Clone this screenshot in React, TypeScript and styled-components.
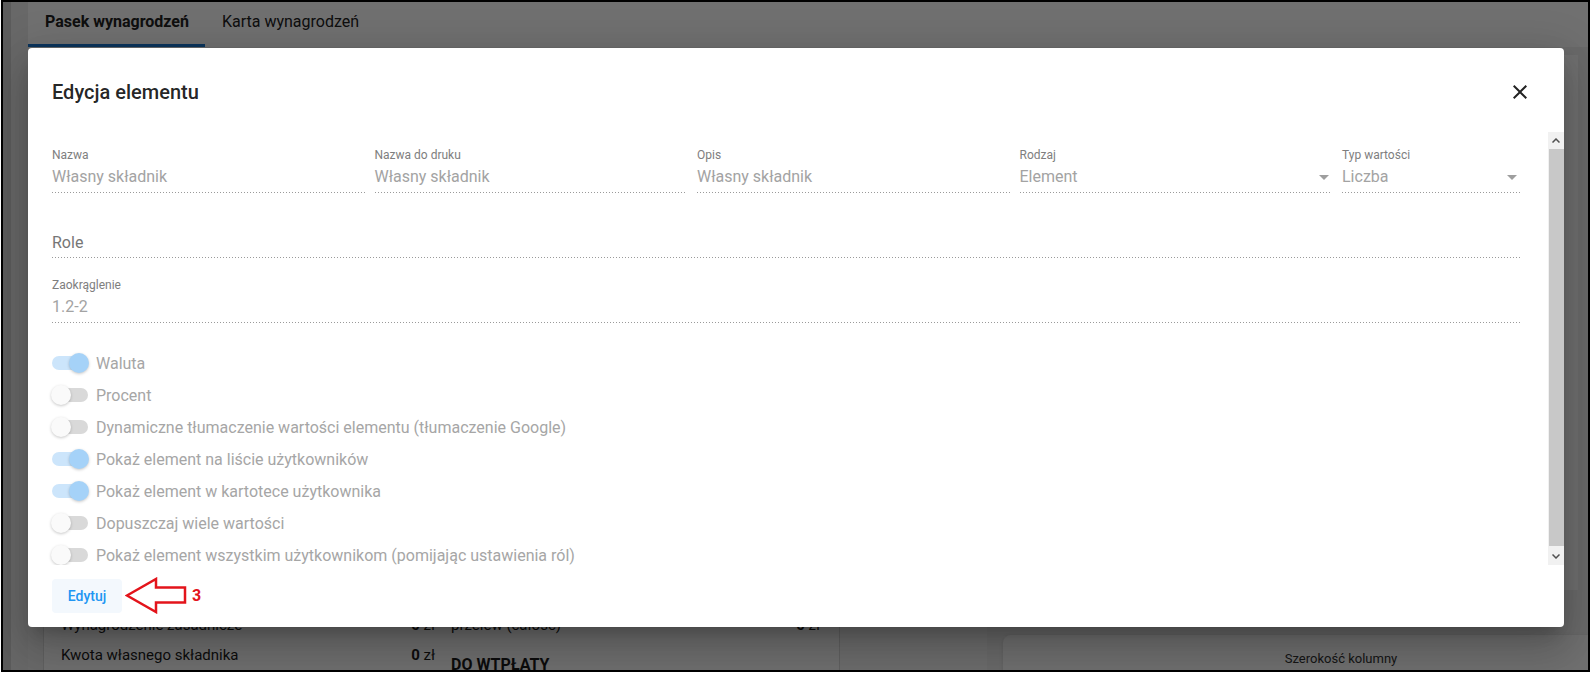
import styled, { createGlobalStyle } from "styled-components";

const GlobalStyle = createGlobalStyle`
  html, body {
    margin: 0;
    padding: 0;
    background: #fff;
  }
  body {
    font-family: Roboto, "Noto Sans", sans-serif;
  }
`;

const Frame = styled.div`
  position: relative;
  box-sizing: border-box;
  width: 1589px;
  height: 672px;
  margin-left: 1px;
  border: 2px solid #000;
  overflow: hidden;
  display: flex;
  background: #f1f1f1;
`;

const Sidebar = styled.div`
  flex: none;
  box-sizing: border-box;
  width: 25px;
  background: #ececec;
  border-left: 8px solid #d2d2d2;
`;

const Main = styled.div`
  flex: 1;
  display: flex;
  flex-direction: column;
  min-width: 0;
`;

const TabBar = styled.div`
  flex: none;
  height: 45px;
  display: flex;
  background: #fff;
`;

const Tab = styled.div<{ active?: boolean }>`
  box-sizing: border-box;
  display: flex;
  align-items: center;
  padding: 0 16px 3px 17px;
  font-size: 16px;
  font-weight: ${(p) => (p.active ? 700 : 400)};
  color: #222;
  white-space: nowrap;
  border-bottom: 3px solid ${(p) => (p.active ? "#1976d2" : "transparent")};
`;

const Body = styled.div`
  flex: 1;
  display: flex;
  flex-direction: column;
  padding: 0 0 0 15px;
`;

const UpperPanel = styled.div`
  flex: none;
  height: 535px;
  margin: 8px 10px 0 0;
  background: #fff;
`;

const BottomRow = styled.div`
  display: flex;
  align-items: flex-start;
`;

const SummaryCard = styled.div`
  flex: none;
  width: 796px;
  height: 120px;
  display: grid;
  grid-template-columns: 397px 1fr;
  padding-top: 20px;
  box-sizing: border-box;
  background: #fff;
  border-left: 1px solid #dcdcdc;
`;

const SummaryCol = styled.div<{ left?: boolean }>`
  padding: ${(p) => (p.left ? "0 6px 0 17px" : "0 19px 0 10px")};
`;

const SummaryRow = styled.div`
  display: flex;
  justify-content: space-between;
  line-height: 30px;
  font-size: 15px;
  color: #1c1c1c;
  b {
    font-weight: 700;
  }
`;

const Heading = styled.div`
  margin-top: 13px;
  line-height: 24px;
  font-size: 16px;
  font-weight: 700;
  color: #1c1c1c;
`;

const SideCard = styled.div`
  flex: none;
  width: 148px;
  height: 120px;
  background: #f7f7f7;
  border-left: 1px solid #dedede;
  box-sizing: border-box;
`;

const WidthCard = styled.div`
  flex: none;
  width: 676px;
  height: 80px;
  margin: 45px 0 0 16px;
  padding-top: 17px;
  box-sizing: border-box;
  background: #fff;
  border-radius: 8px 8px 0 0;
  box-shadow: 0 1px 4px rgba(0, 0, 0, 0.12);
  text-align: center;
  font-size: 13px;
  line-height: 14px;
  color: #333;
`;

const Backdrop = styled.div`
  position: absolute;
  inset: 0;
  background: rgba(0, 0, 0, 0.56);
`;

const Dialog = styled.div`
  position: absolute;
  left: 25px;
  top: 46px;
  width: 1536px;
  height: 579px;
  display: flex;
  flex-direction: column;
  background: #fff;
  border-radius: 4px;
  overflow: hidden;
  box-shadow: 0 11px 15px -7px rgba(0, 0, 0, 0.2),
    0 24px 38px 3px rgba(0, 0, 0, 0.14), 0 9px 46px 8px rgba(0, 0, 0, 0.12);
`;

const Header = styled.div`
  flex: none;
  display: flex;
  align-items: center;
  padding: 28px 32px 0 24px;
  height: 32px;
`;

const Title = styled.h2`
  flex: 1;
  margin: 0;
  font-size: 20px;
  font-weight: 500;
  line-height: 32px;
  color: rgba(0, 0, 0, 0.87);
`;

const CloseIcon = styled.svg`
  width: 24px;
  height: 24px;
  fill: #222;
`;

const ScrollArea = styled.div`
  flex: none;
  height: 433px;
  margin-top: 24px;
  display: flex;
`;

const ScrollContent = styled.div`
  flex: 1;
  min-width: 0;
  padding: 15px 28px 0 24px;
  overflow: hidden;
`;

const FieldRow = styled.div`
  display: grid;
  grid-template-columns: repeat(4, 312.5px) 1fr;
  column-gap: 10px;
`;

const Field = styled.div<{ gap?: number }>`
  display: flex;
  flex-direction: column;
  margin-top: ${(p) => p.gap ?? 0}px;
`;

const FieldLabel = styled.div`
  height: 16px;
  font-size: 12px;
  line-height: 16px;
  color: #7e7e7e;
  white-space: nowrap;
`;

const FieldValue = styled.div<{ dark?: boolean }>`
  display: flex;
  align-items: center;
  justify-content: space-between;
  padding: ${(p) => (p.dark ? "5px 0 5px" : "4px 0 6px")};
  font-size: 16px;
  line-height: 20px;
  color: ${(p) => (p.dark ? "#767676" : "#a3a3a3")};
  background-image: linear-gradient(to right, #9a9a9a 1px, transparent 1px);
  background-size: 3px 1px;
  background-repeat: repeat-x;
  background-position: left bottom;
  white-space: nowrap;
`;

const DropArrow = styled.span`
  width: 0;
  height: 0;
  margin-right: 3px;
  border-left: 5px solid transparent;
  border-right: 5px solid transparent;
  border-top: 5px solid #9e9e9e;
`;

const SwitchList = styled.div`
  margin-top: 24px;
  display: flex;
  flex-direction: column;
`;

const SwitchRow = styled.div`
  display: flex;
  align-items: center;
  height: 32px;
`;

const Track = styled.span<{ on: boolean }>`
  position: relative;
  flex: none;
  width: 36px;
  height: 14px;
  border-radius: 7px;
  background: ${(p) => (p.on ? "#cce5fb" : "#d9d9d9")};
`;

const Thumb = styled.span<{ on: boolean }>`
  position: absolute;
  top: -3px;
  left: ${(p) => (p.on ? "17px" : "-1px")};
  width: 20px;
  height: 20px;
  border-radius: 50%;
  background: ${(p) => (p.on ? "#a5d2f8" : "#fafafa")};
  box-shadow: 0 1px 3px rgba(0, 0, 0, 0.22);
`;

const SwitchLabel = styled.span`
  margin-left: 8px;
  font-size: 16px;
  color: #a6a6a6;
  white-space: nowrap;
`;

const Scrollbar = styled.div`
  flex: none;
  width: 16px;
  display: flex;
  flex-direction: column;
  background: #f1f1f1;
`;

const ScrollButton = styled.div`
  flex: none;
  height: 17px;
  display: flex;
  align-items: center;
  justify-content: center;
  svg {
    width: 8px;
    height: 5px;
    stroke: #505050;
    stroke-width: 1.5;
    fill: none;
  }
`;

const ScrollThumb = styled.div`
  flex: 1;
  margin: 0 0 2px 1px;
  background: #c8c8c8;
`;

const Actions = styled.div`
  flex: none;
  display: flex;
  align-items: center;
  padding: 12px 24px 16px;
`;

const EditButton = styled.button`
  width: 70px;
  height: 34px;
  border: none;
  border-radius: 4px;
  background: #f3f8fd;
  color: #2196f3;
  font-family: Roboto, sans-serif;
  font-size: 14px;
  font-weight: 500;
  padding: 0;
`;

const Pointer = styled.svg`
  width: 62px;
  height: 37px;
  margin-left: 3px;
  flex: none;
`;

const StepNo = styled.span`
  margin-left: 5px;
  font-size: 16px;
  font-weight: 700;
  color: #e3141b;
`;

const switches = [
  { label: "Waluta", on: true },
  { label: "Procent", on: false },
  { label: "Dynamiczne tłumaczenie wartości elementu (tłumaczenie Google)", on: false },
  { label: "Pokaż element na liście użytkowników", on: true },
  { label: "Pokaż element w kartotece użytkownika", on: true },
  { label: "Dopuszczaj wiele wartości", on: false },
  { label: "Pokaż element wszystkim użytkownikom (pomijając ustawienia ról)", on: false },
  { label: "Wartość domyślna", on: false },
];

const fields = [
  { label: "Nazwa", value: "Własny składnik" },
  { label: "Nazwa do druku", value: "Własny składnik" },
  { label: "Opis", value: "Własny składnik" },
  { label: "Rodzaj", value: "Element", select: true },
  { label: "Typ wartości", value: "Liczba", select: true },
];

function App() {
  return (
    <>
      <GlobalStyle />
      <Frame>
        <Sidebar />
        <Main>
          <TabBar>
            <Tab active>Pasek wynagrodzeń</Tab>
            <Tab>Karta wynagrodzeń</Tab>
          </TabBar>
          <Body>
            <UpperPanel />
            <BottomRow>
              <SummaryCard>
                <SummaryCol left>
                  <SummaryRow>
                    <span>Wynagrodzenie zasadnicze</span>
                    <span>
                      <b>0</b> zł
                    </span>
                  </SummaryRow>
                  <SummaryRow>
                    <span>Kwota własnego składnika</span>
                    <span>
                      <b>0</b> zł
                    </span>
                  </SummaryRow>
                </SummaryCol>
                <SummaryCol>
                  <SummaryRow>
                    <span>przelew (całość)</span>
                    <span>
                      <b>0</b> zł
                    </span>
                  </SummaryRow>
                  <Heading>DO WTPŁATY</Heading>
                </SummaryCol>
              </SummaryCard>
              <SideCard />
              <WidthCard>Szerokość kolumny</WidthCard>
            </BottomRow>
          </Body>
        </Main>

        <Backdrop />
        <Dialog>
          <Header>
            <Title>Edycja elementu</Title>
            <CloseIcon viewBox="0 0 24 24">
              <path d="M19 6.41 17.59 5 12 10.59 6.41 5 5 6.41 10.59 12 5 17.59 6.41 19 12 13.41 17.59 19 19 17.59 13.41 12z" />
            </CloseIcon>
          </Header>

          <ScrollArea>
            <ScrollContent>
              <FieldRow>
                {fields.map((f) => (
                  <Field key={f.label}>
                    <FieldLabel>{f.label}</FieldLabel>
                    <FieldValue>
                      <span>{f.value}</span>
                      {f.select && <DropArrow />}
                    </FieldValue>
                  </Field>
                ))}
              </FieldRow>
              <Field gap={19}>
                <FieldLabel />
                <FieldValue dark>Role</FieldValue>
              </Field>
              <Field gap={19}>
                <FieldLabel>Zaokrąglenie</FieldLabel>
                <FieldValue>1.2-2</FieldValue>
              </Field>
              <SwitchList>
                {switches.map((s) => (
                  <SwitchRow key={s.label}>
                    <Track on={s.on}>
                      <Thumb on={s.on} />
                    </Track>
                    <SwitchLabel>{s.label}</SwitchLabel>
                  </SwitchRow>
                ))}
              </SwitchList>
            </ScrollContent>
            <Scrollbar>
              <ScrollButton>
                <svg viewBox="0 0 8 5">
                  <polyline points="0.5,4.5 4,1 7.5,4.5" />
                </svg>
              </ScrollButton>
              <ScrollThumb />
              <ScrollButton>
                <svg viewBox="0 0 8 5">
                  <polyline points="0.5,0.5 4,4 7.5,0.5" />
                </svg>
              </ScrollButton>
            </Scrollbar>
          </ScrollArea>

          <Actions>
            <EditButton>Edytuj</EditButton>
            <Pointer viewBox="0 0 62 37">
              <polygon
                points="2,18.5 31,2 31,10.5 60,10.5 60,25.5 31,25.5 31,35"
                fill="#fff"
                stroke="#e3141b"
                strokeWidth="2.5"
                strokeLinejoin="miter"
              />
            </Pointer>
            <StepNo>3</StepNo>
          </Actions>
        </Dialog>
      </Frame>
    </>
  );
}

export default App;
